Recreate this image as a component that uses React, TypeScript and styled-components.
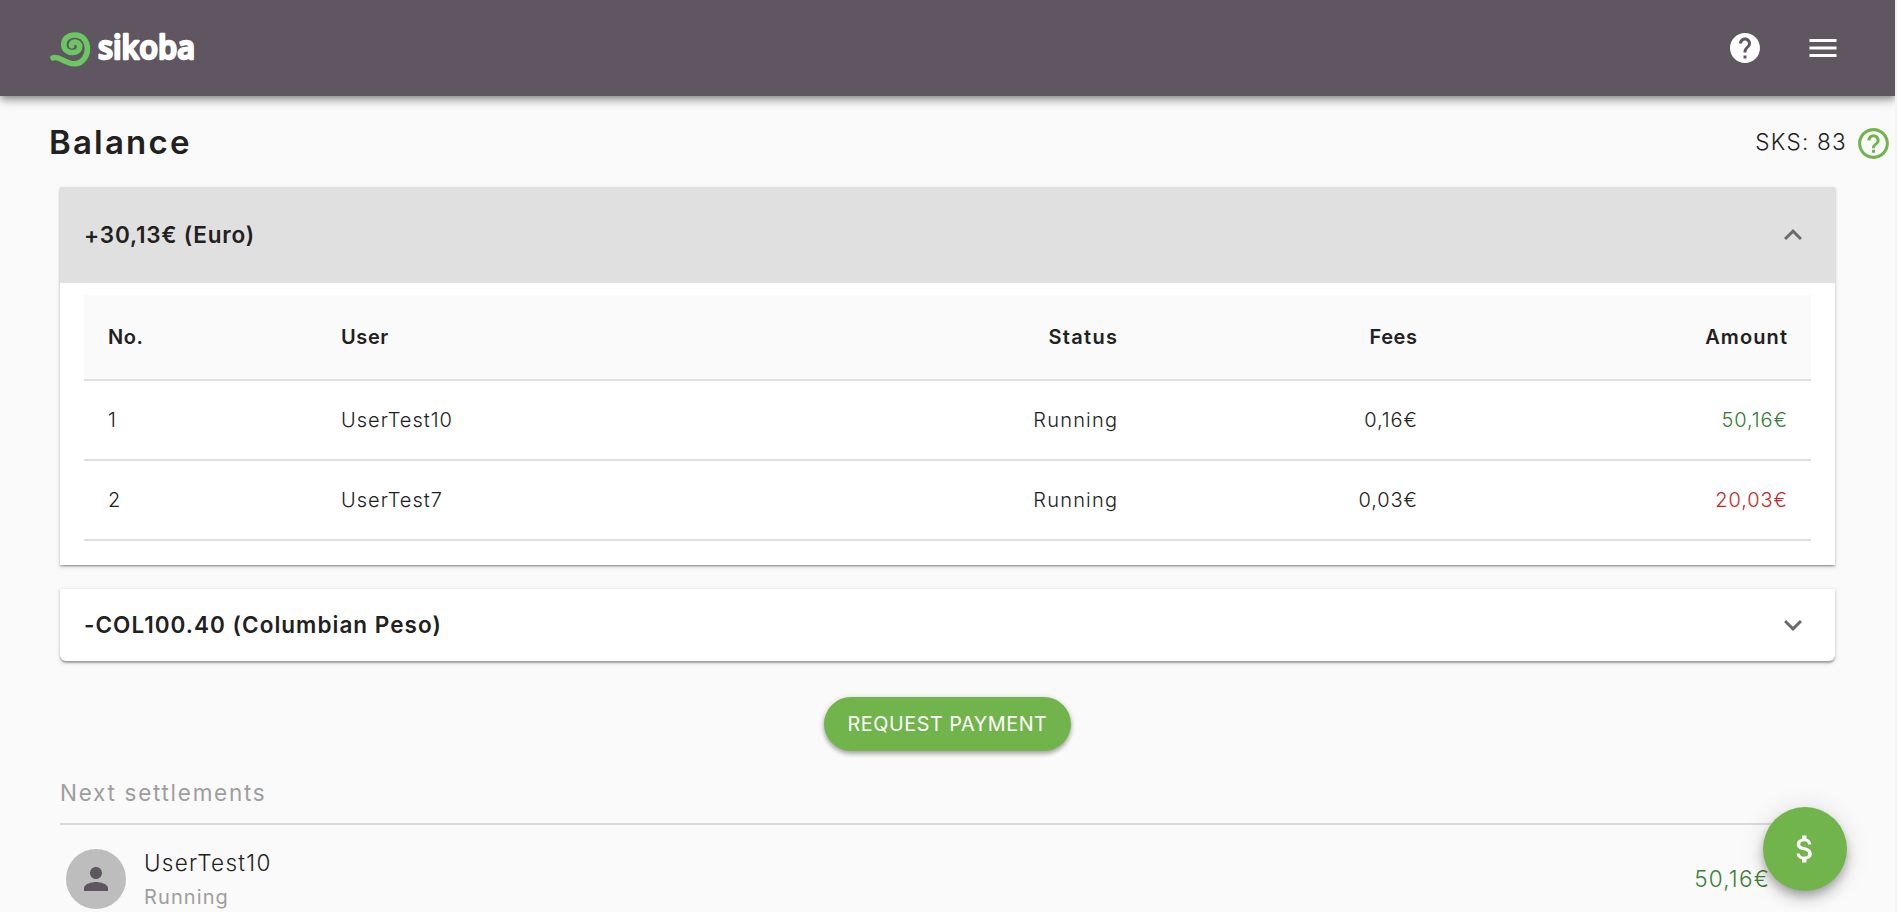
import React from "react";
import styled, { createGlobalStyle, css } from "styled-components";

const GlobalStyle = createGlobalStyle`
  * { box-sizing: border-box; }
  html, body { margin: 0; height: 100%; overflow: hidden; background: #f4f4f4; }
  body {
    font-family: Inter, "Liberation Sans", sans-serif;
    color: #212121;
  }
`;

const Page = styled.div`
  width: 1895px;
  height: 912px;
  overflow: hidden;
  background: #fafafa;
`;

const AppBar = styled.header`
  height: 96px;
  padding: 0 54px 0 50px;
  display: flex;
  align-items: center;
  justify-content: space-between;
  background: #605661;
  box-shadow: 0 3px 6px -1px rgba(0, 0, 0, 0.3), 0 6px 8px rgba(0, 0, 0, 0.16), 0 1px 15px rgba(0, 0, 0, 0.1);
`;

const Actions = styled.div`
  display: flex;
  gap: 42px;
  color: #fff;
`;

const Svg = styled.svg<{ $size: number }>`
  display: block;
  flex: none;
  width: ${(p) => p.$size}px;
  height: ${(p) => p.$size}px;
  fill: currentColor;
`;

const Icon = ({ d, size = 36 }: { d: string; size?: number }) => (
  <Svg $size={size} viewBox="0 0 24 24">
    <path d={d} />
  </Svg>
);

const HELP =
  "M12 2C6.48 2 2 6.48 2 12s4.48 10 10 10 10-4.48 10-10S17.52 2 12 2zm1 17h-2v-2h2v2zm2.07-7.75l-.9.92C13.45 12.9 13 13.5 13 15h-2v-.5c0-1.1.45-2.1 1.17-2.83l1.24-1.26c.37-.36.59-.86.59-1.41 0-1.1-.9-2-2-2s-2 .9-2 2H8c0-2.21 1.79-4 4-4s4 1.79 4 4c0 .88-.36 1.68-.93 2.25z";
const HELP_OUTLINE =
  "M11 18h2v-2h-2v2zm1-16C6.48 2 2 6.48 2 12s4.48 10 10 10 10-4.48 10-10S17.52 2 12 2zm0 18c-4.41 0-8-3.59-8-8s3.59-8 8-8 8 3.59 8 8-3.59 8-8 8zm0-14c-2.21 0-4 1.79-4 4h2c0-1.1.9-2 2-2s2 .9 2 2c0 2-3 1.75-3 5h2c0-2.25 3-2.5 3-5 0-2.21-1.79-4-4-4z";
const MENU = "M3 18h18v-2H3v2zm0-5h18v-2H3v2zm0-7v2h18V6H3z";
const LESS = "M12 8l-6 6 1.41 1.41L12 10.83l4.59 4.58L18 14z";
const MORE = "M16.59 8.59L12 13.17 7.41 8.59 6 10l6 6 6-6z";
const PERSON =
  "M12 12c2.21 0 4-1.79 4-4s-1.79-4-4-4-4 1.79-4 4 1.79 4 4 4zm0 2c-2.67 0-8 1.34-8 4v2h16v-2c0-2.66-5.33-4-8-4z";
const DOLLAR =
  "M11.8 10.9c-2.27-.59-3-1.2-3-2.15 0-1.09 1.01-1.85 2.7-1.85 1.78 0 2.44.85 2.5 2.1h2.21c-.07-1.72-1.12-3.3-3.21-3.81V3h-3v2.16c-1.94.42-3.5 1.68-3.5 3.61 0 2.31 1.91 3.46 4.7 4.13 2.5.6 3 1.48 3 2.41 0 .69-.49 1.79-2.7 1.79-2.06 0-2.87-.92-2.98-2.1h-2.2c.12 2.19 1.76 3.42 3.68 3.83V21h3v-2.15c1.95-.37 3.5-1.5 3.5-3.55 0-2.84-2.43-3.81-4.7-4.4z";

const LogoSvg = styled.svg`
  display: block;
  width: 150px;
  height: 80px;
  overflow: visible;
  font-family: "Open Sans", sans-serif;
  font-weight: 600;
  font-size: 33px;
`;

const Logo = () => (
  <LogoSvg viewBox="50 8 150 80">
    <path
      d="M53 57.8C60 55.500 64.500 63.800 74.500 63.800C82.500 63.800 87.400 56 87.400 49C87.400 40.500 82.500 35 75 35C68 35 63.800 39 63.800 44.500C63.800 49.500 67.500 52.500 72.500 52.500C77 52.500 79.700 50 79.700 46.700C79.700 43.700 77.500 42 74.800 42C72.500 42 71 43.500 71.600 45.700"
      fill="none"
      stroke="#6cc763"
      strokeWidth="5.600"
      strokeLinecap="round"
      strokeLinejoin="round"
    />
    <text
      x="98"
      y="58.800"
      textLength="97"
      lengthAdjust="spacingAndGlyphs"
      fill="#fff"
      stroke="#fff"
      strokeWidth="2.400"
      strokeLinejoin="round"
    >
      sikoba
    </text>
  </LogoSvg>
);

const TitleRow = styled.div`
  height: 91px;
  padding: 0 3px 0 49px;
  display: flex;
  align-items: center;
  justify-content: space-between;
`;

const Title = styled.h1`
  margin: 0;
  font-size: 33px;
  line-height: 40px;
  font-weight: 600;
  letter-spacing: 2.2px;
`;

const Score = styled.div`
  display: flex;
  align-items: center;
  gap: 8px;
  padding-top: 4px;
  color: #72b44c;
`;

const ScoreText = styled.span`
  color: #212121;
  font-size: 22.5px;
  line-height: 30px;
  font-weight: 300;
  letter-spacing: 1.25px;
  transform: translateY(-2px);
`;

const Content = styled.main`
  padding: 0 60px;
`;

const Panel = styled.section<{ $last?: boolean }>`
  background: #fff;
  border-radius: ${(p) => (p.$last ? "0 0 6px 6px" : "0")};
  box-shadow: 0 3px 1.5px -3px rgba(0, 0, 0, 0.2), 0 1.5px 1.5px rgba(0, 0, 0, 0.24), 0 1.5px 4.5px rgba(0, 0, 0, 0.16);
  & + & { margin-top: 24px; }
`;

const PanelHead = styled.div<{ $open?: boolean }>`
  height: ${(p) => (p.$open ? 96 : 72)}px;
  padding: 0 24px;
  display: flex;
  align-items: center;
  justify-content: space-between;
  background: ${(p) => (p.$open ? "#e0e0e0" : "transparent")};
  color: #6c6c6c;
`;

const PanelTitle = styled.h2<{ $spacing: number }>`
  margin: 0;
  color: #212121;
  font-size: 22.5px;
  line-height: 32px;
  font-weight: 600;
  letter-spacing: ${(p) => p.$spacing}px;
`;

const PanelBody = styled.div`
  height: 282px;
  padding: 12px 24px 0;
`;

const row = css`
  display: grid;
  grid-template-columns: 233px 449px 327px 300px 1fr;
  align-items: center;
  padding: 0 24px;
  border-bottom: 2px solid #dfdfdf;
`;

const HeadRow = styled.div`
  ${row}
  height: 86px;
  background: #fafafa;
  font-weight: 600;
`;

const Row = styled.div`
  ${row}
  height: 80px;
  font-weight: 300;
`;

const Cell = styled.span<{ $end?: boolean; $spacing?: number; $color?: string }>`
  font-size: 20px;
  line-height: 28px;
  text-align: ${(p) => (p.$end ? "right" : "left")};
  letter-spacing: ${(p) => p.$spacing ?? 1}px;
  margin-right: ${(p) => (p.$end ? -(p.$spacing ?? 1) : 0)}px;
  color: ${(p) => p.$color ?? "inherit"};
`;

const ButtonRow = styled.div`
  display: flex;
  justify-content: center;
  margin-top: 36px;
`;

const PillButton = styled.button`
  width: 247px;
  height: 54px;
  padding: 0;
  border: 0;
  border-radius: 27px;
  background: #72b44c;
  color: #fff;
  font-family: inherit;
  font-size: 19.8px;
  font-weight: 400;
  letter-spacing: 0.55px;
  white-space: nowrap;
  box-shadow: 0 3px 4px rgba(0, 0, 0, 0.26), 0 1px 6px rgba(0, 0, 0, 0.16);
`;

const Subheader = styled.h3`
  height: 74px;
  margin: 0;
  padding: 25px 0 0;
  border-bottom: 2px solid #dadada;
  color: #9e9e9e;
  font-size: 22.5px;
  line-height: 34px;
  font-weight: 400;
  letter-spacing: 1.72px;
`;

const Settlement = styled.div`
  display: flex;
  align-items: flex-start;
  padding: 24px 65px 0 6px;
`;

const Avatar = styled.div`
  width: 60px;
  height: 60px;
  border-radius: 50%;
  display: flex;
  align-items: center;
  justify-content: center;
  background: #bdbdbd;
  color: #605661;
`;

const Person = styled.div`
  flex: 1;
  margin-left: 18px;
  margin-top: -4px;
`;

const Name = styled.div`
  font-size: 22.5px;
  line-height: 36px;
  font-weight: 300;
  letter-spacing: 1.3px;
`;

const State = styled.div`
  color: #9e9e9e;
  font-size: 20px;
  line-height: 32px;
  font-weight: 400;
  letter-spacing: 1.1px;
`;

const Amount = styled.div`
  margin-top: 14px;
  color: #3d8033;
  font-size: 22.5px;
  line-height: 32px;
  font-weight: 300;
  letter-spacing: 1.2px;
`;

const Fab = styled.button`
  position: fixed;
  left: 1763px;
  top: 807px;
  width: 84px;
  height: 84px;
  padding: 0;
  border: 0;
  border-radius: 50%;
  display: flex;
  align-items: center;
  justify-content: center;
  background: #72b44c;
  color: #fff;
  box-shadow: 0 5px 8px -1px rgba(0, 0, 0, 0.22), 0 9px 15px rgba(0, 0, 0, 0.14), 0 1px 27px rgba(0, 0, 0, 0.12);
`;

const rows = [
  { no: "1", user: "UserTest10", status: "Running", fees: "0,16€", amount: "50,16€", color: "#2e7d32" },
  { no: "2", user: "UserTest7", status: "Running", fees: "0,03€", amount: "20,03€", color: "#c62828" },
];

export default function App() {
  return (
    <>
      <GlobalStyle />
      <Page>
        <AppBar>
          <Logo />
          <Actions>
            <Icon d={HELP} />
            <Icon d={MENU} />
          </Actions>
        </AppBar>
        <TitleRow>
          <Title>Balance</Title>
          <Score>
            <ScoreText>SKS: 83</ScoreText>
            <Icon d={HELP_OUTLINE} size={37} />
          </Score>
        </TitleRow>
        <Content>
          <Panel>
            <PanelHead $open>
              <PanelTitle $spacing={0.8}>+30,13€ (Euro)</PanelTitle>
              <Icon d={LESS} />
            </PanelHead>
            <PanelBody>
              <HeadRow>
                <Cell $spacing={0.6}>No.</Cell>
                <Cell $spacing={0.6}>User</Cell>
                <Cell $end $spacing={1.3}>Status</Cell>
                <Cell $end $spacing={0.6}>Fees</Cell>
                <Cell $end $spacing={1.1}>Amount</Cell>
              </HeadRow>
              {rows.map((r) => (
                <Row key={r.no}>
                  <Cell>{r.no}</Cell>
                  <Cell>{r.user}</Cell>
                  <Cell $end $spacing={1.2}>{r.status}</Cell>
                  <Cell $end $spacing={0.9}>{r.fees}</Cell>
                  <Cell $end $spacing={0.9} $color={r.color}>{r.amount}</Cell>
                </Row>
              ))}
            </PanelBody>
          </Panel>
          <Panel $last>
            <PanelHead>
              <PanelTitle $spacing={1.03}>-COL100.40 (Columbian Peso)</PanelTitle>
              <Icon d={MORE} />
            </PanelHead>
          </Panel>
          <ButtonRow>
            <PillButton>REQUEST PAYMENT</PillButton>
          </ButtonRow>
          <Subheader>Next settlements</Subheader>
          <Settlement>
            <Avatar>
              <Icon d={PERSON} />
            </Avatar>
            <Person>
              <Name>UserTest10</Name>
              <State>Running</State>
            </Person>
            <Amount>50,16€</Amount>
          </Settlement>
        </Content>
        <Fab>
          <Icon d={DOLLAR} />
        </Fab>
      </Page>
    </>
  );
}
